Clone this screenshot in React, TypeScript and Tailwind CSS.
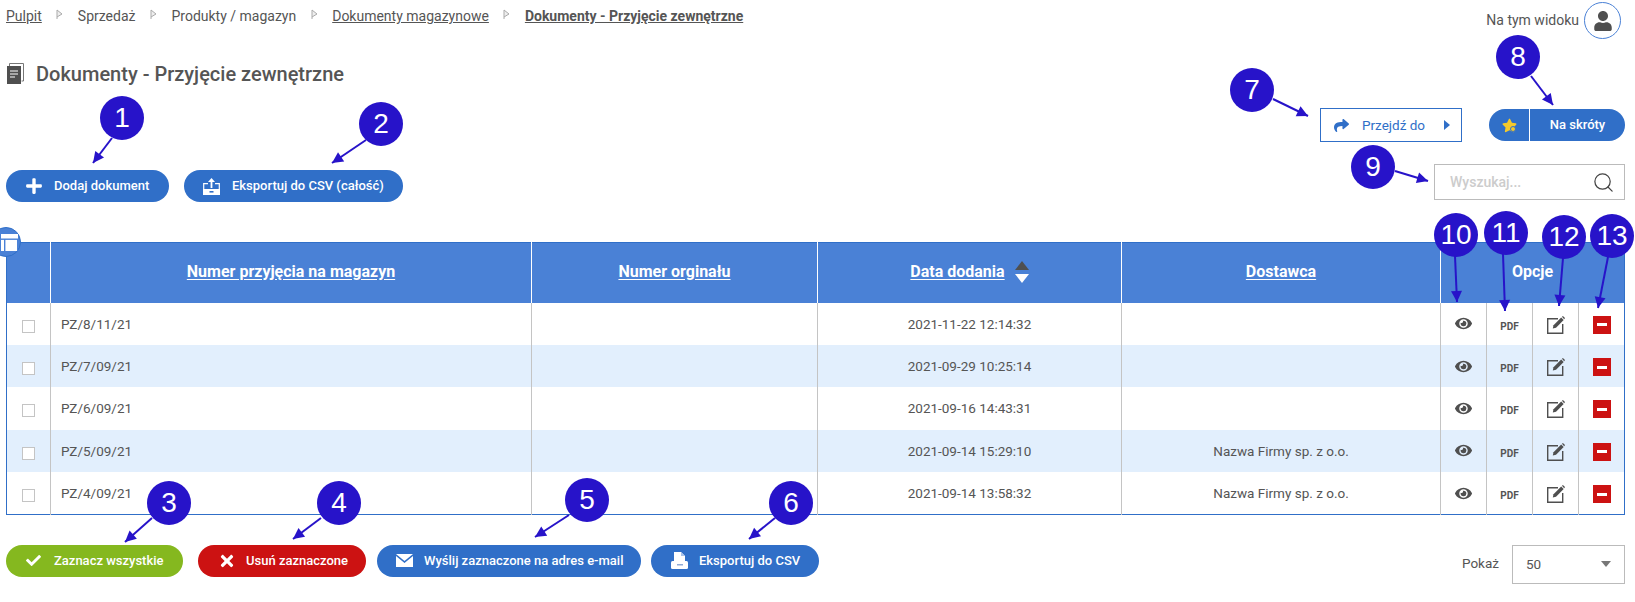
import { FaCheck, FaEye, FaPlus, FaShare, FaStar, FaTimes, FaUser } from "react-icons/fa";
import { Search } from "lucide-react";

const rows = [
  { nr: "PZ/8/11/21", date: "2021-11-22 12:14:32", supplier: "" },
  { nr: "PZ/7/09/21", date: "2021-09-29 10:25:14", supplier: "" },
  { nr: "PZ/6/09/21", date: "2021-09-16 14:43:31", supplier: "" },
  { nr: "PZ/5/09/21", date: "2021-09-14 15:29:10", supplier: "Nazwa Firmy sp. z o.o." },
  { nr: "PZ/4/09/21", date: "2021-09-14 13:58:32", supplier: "Nazwa Firmy sp. z o.o." },
];

const marks = [
  { label: "1", x: 122, y: 118, from: [112, 138], to: [93, 163] },
  { label: "2", x: 381, y: 124, from: [366, 140], to: [332, 163] },
  { label: "3", x: 169, y: 503, from: [152, 518], to: [125, 542] },
  { label: "4", x: 339, y: 503, from: [321, 518], to: [293, 539] },
  { label: "5", x: 587, y: 500, from: [569, 515], to: [535, 537] },
  { label: "6", x: 791, y: 503, from: [775, 518], to: [749, 539] },
  { label: "7", x: 1252, y: 90, from: [1273, 99], to: [1308, 116] },
  { label: "8", x: 1518, y: 57, from: [1531, 76], to: [1553, 105] },
  { label: "9", x: 1373, y: 167, from: [1395, 171], to: [1428, 181] },
  { label: "10", x: 1456, y: 235, from: [1455, 256], to: [1457, 302] },
  { label: "11", x: 1506, y: 233, from: [1503, 254], to: [1505, 311] },
  { label: "12", x: 1564, y: 237, from: [1563, 258], to: [1559, 306] },
  { label: "13", x: 1612, y: 236, from: [1608, 257], to: [1598, 308] },
];

const arrowHead = (from: number[], to: number[]) => {
  const dx = to[0] - from[0];
  const dy = to[1] - from[1];
  const len = Math.hypot(dx, dy);
  const ux = dx / len;
  const uy = dy / len;
  const bx = to[0] - ux * 11;
  const by = to[1] - uy * 11;
  return `${to[0]},${to[1]} ${bx - uy * 5.5},${by + ux * 5.5} ${bx + uy * 5.5},${by - ux * 5.5}`;
};

const Annotations = () => (
  <>
    <svg className="absolute left-0 top-0 pointer-events-none" width={1635} height={602}>
      {marks.map((m) => (
        <g key={m.label}>
          <line x1={m.from[0]} y1={m.from[1]} x2={m.to[0]} y2={m.to[1]} stroke="#2713c9" strokeWidth={2} />
          <polygon points={arrowHead(m.from, m.to)} fill="#2713c9" />
        </g>
      ))}
    </svg>
    {marks.map((m) => (
      <div
        key={m.label}
        className="absolute size-[44px] rounded-full bg-[#2713c9] text-white flex items-center justify-center text-[28px] font-['Liberation_Sans',sans-serif]"
        style={{ left: m.x - 22, top: m.y - 22 }}
      >
        {m.label}
      </div>
    ))}
  </>
);

const Crumb = () => (
  <svg width="7" height="11" viewBox="0 0 7 11" className="mx-[14.5px] mb-[4px]">
    <path d="M1 1v9M1 1l5 4-5 3" fill="#eee" stroke="#aaa" strokeWidth="1" />
  </svg>
);

const Pill = ({ color, className, icon, label }: { color: string; className: string; icon: React.ReactNode; label: string }) => (
  <button className={`h-[32px] rounded-full ${color} ${className} flex items-center text-white text-[13px] font-medium`}>
    {icon}
    {label}
  </button>
);

const BookIcon = () => (
  <svg width="17" height="21" viewBox="0 0 17 21" className="ml-[1px]">
    <path d="M2.5 3V.5h14V18h-2" fill="none" stroke="#777" strokeWidth="1" />
    <rect x="0" y="3" width="14" height="18" fill="#4f4f4f" />
    <path d="M3 8h8M3 11h8M3 14h5" stroke="#fff" strokeWidth="1.2" />
  </svg>
);

const ExportIcon = () => (
  <svg width="17" height="17" viewBox="0 0 17 17" className="mr-[12px]">
    <path d="M8.5 0l3.5 4H9.4v6H7.6V4H5z" fill="#fff" />
    <path d="M5 5.6H.7v10.7h15.6V5.6H12" fill="none" stroke="#fff" strokeWidth="1.2" />
    <rect x="0" y="11" width="17" height="6" fill="#fff" />
    <rect x="6.5" y="13" width="4" height="1.6" fill="#306fc8" />
  </svg>
);

const MailIcon = () => (
  <svg width="17" height="13" viewBox="0 0 17 13" className="mr-[11px]">
    <path d="M0 0h17L8.5 7z" fill="#fff" />
    <path d="M0 2l8.5 7L17 2v11H0z" fill="#fff" />
  </svg>
);

const CsvIcon = () => (
  <svg width="17" height="17" viewBox="0 0 17 17" className="mr-[11px]">
    <path d="M3 0h7l4 4v8H3z" fill="#fff" />
    <path d="M10 0v4h4" fill="#a9c3ea" />
    <rect x="0" y="9" width="17" height="8" rx="1.5" fill="#fff" />
    <rect x="6" y="12" width="6" height="1.5" fill="#8fa9d6" />
  </svg>
);

const EditIcon = () => (
  <svg width="18" height="18" viewBox="0 0 18 18" className="mx-auto mt-[2px]">
    <path d="M11 2.7H.7v14.6h15V8" fill="none" stroke="#4f4f4f" strokeWidth="1.4" />
    <path d="M14.2 1.6l2.5 2.4-7.7 7.7-3.2.8.7-3.2z" fill="#4f4f4f" />
    <path d="M15 .8l.9-.8 2.1 2-.8 1.2z" fill="#4f4f4f" />
  </svg>
);

const TableIcon = () => (
  <svg width="17" height="17" viewBox="0 0 17 17" className="mr-[-6px]">
    <rect x="0" y="0" width="17" height="17" fill="#fff" />
    <rect x="0" y="4.5" width="17" height="1.4" fill="#4a81d6" />
    <rect x="3" y="5" width="1.4" height="12" fill="#4a81d6" />
    <rect x="16" y="5" width="1" height="12" fill="#4a81d6" />
  </svg>
);

const Divider = "border-l border-[#c4c4c4]";
const headCell = "border-l border-white text-white text-[16px] font-bold text-center pb-[2px]";
const headLink = "underline underline-offset-2";

export default function App() {
  return (
    <div className="relative h-[602px] w-full overflow-hidden bg-white pl-[6px] pr-[10px] text-[#555] font-[Roboto,sans-serif]">
      <div className="flex justify-between">
        <div className="flex flex-col">
          <nav className="flex items-center pt-[6px] h-[27px] text-[14px]">
            <span className="underline">Pulpit</span>
            <Crumb />
            <span>Sprzedaż</span>
            <Crumb />
            <span>Produkty / magazyn</span>
            <Crumb />
            <span className="underline">Dokumenty magazynowe</span>
            <Crumb />
            <span className="underline font-bold">Dokumenty - Przyjęcie zewnętrzne</span>
          </nav>
          <div className="mt-[35px] flex items-center gap-[12px] h-[23px]">
            <BookIcon />
            <h1 className="text-[20px] font-medium">Dokumenty - Przyjęcie zewnętrzne</h1>
          </div>
          <div className="mt-[85px] flex gap-[15px]">
            <Pill color="bg-[#306fc8]" className="w-[163px] pl-[19px]" icon={<FaPlus className="mr-[11px] text-[18px]" />} label="Dodaj dokument" />
            <Pill color="bg-[#306fc8]" className="w-[219px] pl-[19px]" icon={<ExportIcon />} label="Eksportuj do CSV (całość)" />
          </div>
        </div>

        <div className="flex flex-col items-end">
          <div className="mt-[2px] flex items-center gap-[5px] text-[14px]">
            <span>Na tym widoku</span>
            <div className="mr-[4px] size-[37px] rounded-full border border-[#4a81d6] flex items-center justify-center">
              <FaUser className="text-[20px] text-[#4f4f4f]" />
            </div>
          </div>
          <div className="mt-[69px] flex items-center gap-[27px]">
            <div className="w-[142px] h-[34px] border border-[#306fc8] flex items-center pl-[13px] text-[#306fc8] text-[13.5px]">
              <FaShare className="mr-[13px] text-[15px]" />
              Przejdź do
              <span className="ml-[19px] border-y-[5px] border-l-[6px] border-y-transparent border-l-[#306fc8]" />
            </div>
            <div className="w-[136px] h-[32px] rounded-full bg-[#306fc8] flex items-center text-white text-[13px] font-medium">
              <div className="relative w-[41px] h-full border-r border-white flex items-center justify-center">
                <FaStar className="text-[15px] text-[#f5c92b]" />
                <span className="absolute left-[21px] top-[17px] size-[6px] rounded-full bg-[#f5c92b] border border-[#306fc8]" />
              </div>
              <span className="flex-1 text-center">Na skróty</span>
            </div>
          </div>
          <div className="mt-[22px] w-[191px] h-[36px] border border-[#bbb] flex items-center justify-between pl-[15px] pr-[9px] text-[14px] font-medium text-[#ccc]">
            Wyszukaj...
            <Search className="size-[23px] text-[#444]" strokeWidth={1.3} />
          </div>
        </div>
      </div>

      <div className="relative mt-[40px]">
        <div className="absolute left-[-15px] top-[-15px] z-10 size-[30px] rounded-full bg-[#4a81d6] border border-[#306fc8] flex items-center justify-center">
          <TableIcon />
        </div>
        <table className="w-full table-fixed border-collapse border border-[#306fc8] text-[13.5px]">
          <colgroup>
            <col className="w-[44px]" />
            <col className="w-[481px]" />
            <col className="w-[286px]" />
            <col className="w-[304px]" />
            <col className="w-[319px]" />
            <col className="w-[46px]" />
            <col className="w-[46px]" />
            <col className="w-[46px]" />
            <col className="w-[46px]" />
          </colgroup>
          <thead>
            <tr className="h-[60px] bg-[#4a81d6]">
              <th />
              <th className={headCell}>
                <span className={headLink}>Numer przyjęcia na magazyn</span>
              </th>
              <th className={headCell}>
                <span className={headLink}>Numer orginału</span>
              </th>
              <th className={headCell}>
                <span className="inline-flex items-center gap-[10px]">
                  <span className={headLink}>Data dodania</span>
                  <span className="flex flex-col gap-[4px]">
                    <span className="border-x-[7px] border-b-[9px] border-x-transparent border-b-[#4f4f4f]" />
                    <span className="border-x-[7px] border-t-[9px] border-x-transparent border-t-white" />
                  </span>
                </span>
              </th>
              <th className={headCell}>
                <span className={headLink}>Dostawca</span>
              </th>
              <th colSpan={4} className={headCell}>
                Opcje
              </th>
            </tr>
          </thead>
          <tbody>
            {rows.map((row, i) => (
              <tr key={row.nr} className={`h-[42.4px] ${i % 2 === 1 ? "bg-[#e2effd]" : "bg-white"}`}>
                <td className="text-center pt-[2px]">
                  <span className="inline-block size-[13px] border border-[#c4c4c4] bg-white align-middle" />
                </td>
                <td className={`${Divider} pl-[10px]`}>{row.nr}</td>
                <td className={Divider} />
                <td className={`${Divider} text-center`}>{row.date}</td>
                <td className={`${Divider} text-center`}>{row.supplier}</td>
                <td className={Divider}>
                  <FaEye className="mx-auto text-[17px] text-[#4f4f4f]" />
                </td>
                <td className={`${Divider} text-center text-[10px] font-bold pt-[5px]`}>PDF</td>
                <td className={Divider}>
                  <EditIcon />
                </td>
                <td className={Divider}>
                  <div className="mx-auto mt-[2px] w-[18px] h-[18px] bg-[#cc1212] flex items-center justify-center">
                    <div className="w-[10px] h-[3px] bg-white" />
                  </div>
                </td>
              </tr>
            ))}
          </tbody>
        </table>
      </div>

      <div className="mt-[30px] flex justify-between">
        <div className="flex">
          <Pill color="bg-[#85b81f]" className="w-[177px] pl-[20px]" icon={<FaCheck className="mr-[13px] text-[15px]" />} label="Zaznacz wszystkie" />
          <Pill color="bg-[#cc1212] ml-[15px]" className="w-[168px] pl-[20px]" icon={<FaTimes className="mr-[10px] text-[18px]" />} label="Usuń zaznaczone" />
          <Pill color="bg-[#306fc8] ml-[11px]" className="w-[264px] pl-[19px]" icon={<MailIcon />} label="Wyślij zaznaczone na adres e-mail" />
          <Pill color="bg-[#306fc8] ml-[10px]" className="w-[168px] pl-[20px]" icon={<CsvIcon />} label="Eksportuj do CSV" />
        </div>
        <div className="flex items-center gap-[13px] text-[13.5px]">
          <span className="mb-[2px]">Pokaż</span>
          <div className="w-[113px] h-[39px] border border-[#bbb] flex items-center justify-between pl-[13px] pr-[13px]">
            50
            <span className="border-x-[5px] border-t-[6px] border-x-transparent border-t-[#777]" />
          </div>
        </div>
      </div>

      <Annotations />
    </div>
  );
}
